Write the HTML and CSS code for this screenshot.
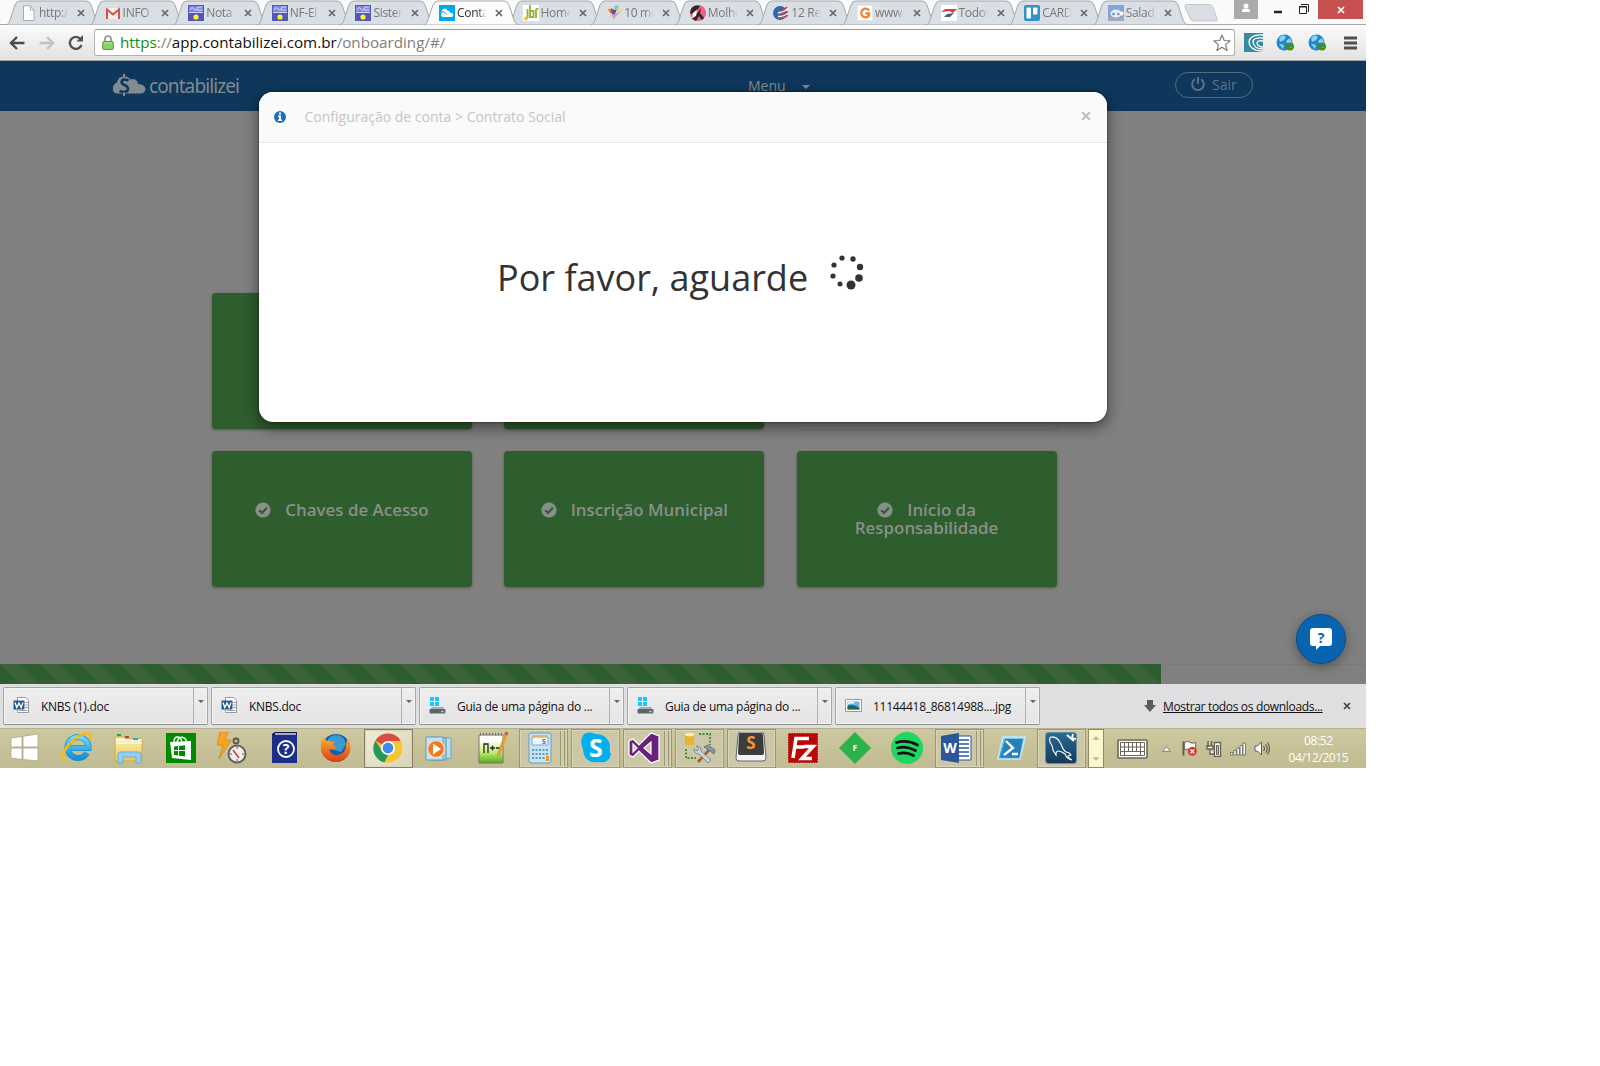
FILE: index.html
```html
<!DOCTYPE html>
<html lang="pt-BR">
<head>
<meta charset="utf-8">
<title>Contabilizei</title>
<link rel="stylesheet" href="styles.css">
</head>
<body>
<svg class="sprite" aria-hidden="true">
  <symbol id="tab-shape" viewBox="0 0 97 25"><path d="M0 25C4 24 4 23 5 20L10 5Q11.500 1 15 1H81Q84.500 1 86 5L91 20Q92.500 24.500 96 25Z"/></symbol>
  <symbol id="x" viewBox="0 0 8 8"><path d="M1 1L7 7M7 1L1 7" fill="none" stroke="currentColor" stroke-width="1.700"/></symbol>
  <symbol id="nf" viewBox="0 0 16 16"><path fill="#5358b4" d="M0 0h16v16H0z"/><path fill="#8187de" d="M1 1h14v6H1z"/><path d="M2 5q2-4 4-1t4-2h4M9 5h5M1 7.500h14" stroke="#dfe2ff" stroke-width=".9" fill="none"/><circle cx="8" cy="12" r="2.600" fill="#fff32c"/></symbol>
  <symbol id="check" viewBox="0 0 16 16"><circle cx="8" cy="8" r="7.600" fill="#8b8f8b"/><path d="M4.200 8.200l2.800 2.700 5-5.200" fill="none" stroke="#2e5d2e" stroke-width="2.200"/></symbol>
  <symbol id="globe" viewBox="0 0 20 18"><circle cx="8.500" cy="8.500" r="8" fill="#2089ca"/><path d="M3 4l4-3 3 2-2 3-4 2zM10 7l4-3 2 5-3 3zM3 10l5 1-1 4z" fill="#8ed2f2"/><circle cx="14" cy="12.500" r="2.800" fill="none" stroke="#4b8d17" stroke-width="2.400"/><path d="M10 9h4v4z" fill="#4b8d17"/></symbol>
  <symbol id="doc" viewBox="0 0 17 17"><path d="M4.500.5h8l3 3v12h-11z" fill="#fff" stroke="#999"/><path d="M12 5.500h3M12 8h3M12 10.500h3M6 13.500h8" stroke="#999"/><path d="M.5 3.500h11v9H.5z" fill="#2a5697"/><path d="M2 5.500l1.800 5L6 6l2.200 4.500 1.800-5" fill="none" stroke="#fff" stroke-width="1.300"/></symbol>
  <symbol id="drive" viewBox="0 0 17 17"><path fill="#18c8fa" d="M1 0h4v4H1zM6 0h4v4H6zM1 5h4v4H1zM6 5h4v4H6z"/><path d="M3 10h11l2 3H1z" fill="#a9b0b5"/><rect x=".5" y="12" width="16" height="4.500" rx="1" fill="#58666d"/><path d="M12 14.500h3" stroke="#4dfc63" stroke-width="1.500"/></symbol>
  <linearGradient id="sky" x2="0" y2="1"><stop stop-color="#72d7ff"/><stop offset="1" stop-color="#168fd7"/></linearGradient>
  <linearGradient id="folder" x2="0" y2="1"><stop stop-color="#fff2b4"/><stop offset="1" stop-color="#e8c55c"/></linearGradient>
  <linearGradient id="fire" x2="0" y2="1"><stop stop-color="#ffb229"/><stop offset="1" stop-color="#d93f16"/></linearGradient>
  <linearGradient id="sea" x2="0" y2="1"><stop stop-color="#296b98"/><stop offset="1" stop-color="#153958"/></linearGradient>
  <linearGradient id="sheet" x2="0" y2="1"><stop offset=".2" stop-color="#fff"/><stop offset=".6" stop-color="#c6ee74"/><stop offset="1" stop-color="#4fae1c"/></linearGradient>
</svg>

<div class="screen">
  <div class="tabstrip">
    <div class="tabs">
      <div class="tab"><svg class="shape"><use href="#tab-shape"/></svg><svg class="fav" viewBox="0 0 16 16"><path d="M2.500.8h7l3.500 4v10.700H2.500z" fill="#fff" stroke="#aaa"/><path d="M9.500 1v4H13" fill="none" stroke="#aaa"/></svg><span class="label">http:/</span><svg class="close"><use href="#x"/></svg></div>
      <div class="tab"><svg class="shape"><use href="#tab-shape"/></svg><svg class="fav" viewBox="0 0 16 16"><path d="M1 3h14v11H1z" fill="#f3f0ee"/><path d="M2 14V4.500L8 9.500l6-5V14" fill="none" stroke="#db5147" stroke-width="2"/></svg><span class="label">INFO</span><svg class="close"><use href="#x"/></svg></div>
      <div class="tab"><svg class="shape"><use href="#tab-shape"/></svg><svg class="fav"><use href="#nf"/></svg><span class="label">Nota</span><svg class="close"><use href="#x"/></svg></div>
      <div class="tab"><svg class="shape"><use href="#tab-shape"/></svg><svg class="fav"><use href="#nf"/></svg><span class="label">NF-El</span><svg class="close"><use href="#x"/></svg></div>
      <div class="tab"><svg class="shape"><use href="#tab-shape"/></svg><svg class="fav"><use href="#nf"/></svg><span class="label">Sister</span><svg class="close"><use href="#x"/></svg></div>
      <div class="tab active"><svg class="shape"><use href="#tab-shape"/></svg><svg class="fav" viewBox="0 0 16 16"><path fill="#00a9ea" d="M0 0h16v16H0z"/><path fill="#fff" d="M4 12a2.200 2.200 0 0 1-1-4 3 3 0 0 1 5.500-2.500A2.500 2.500 0 0 1 11 8a2 2 0 0 1 2 4z"/><path d="M3 6.500q3 0 5 3" stroke="#00a9ea" fill="none"/></svg><span class="label">Conta</span><svg class="close"><use href="#x"/></svg></div>
      <div class="tab"><svg class="shape"><use href="#tab-shape"/></svg><svg class="fav" viewBox="0 0 16 16"><path fill="#fff" d="M0 0h16v16H0z"/><path d="M4.500 4v8q0 2-2.500 2M7 0v12h3.500V6H7M13 13V5q0-1.500 2.500-1" fill="none" stroke="#93b937" stroke-width="1.900"/><circle cx="3" cy="13.500" r="2" fill="#e5c928"/></svg><span class="label">Home</span><svg class="close"><use href="#x"/></svg></div>
      <div class="tab"><svg class="shape"><use href="#tab-shape"/></svg><svg class="fav" viewBox="0 0 16 16"><path fill="#f4d77c" d="M1 4l4-3v6z"/><path fill="#e0559a" d="M2 4l6 1-3 4z"/><path fill="#65507e" d="M5 3l3 2 3-1-2 5H6z"/><path fill="#8bc3e5" d="M8 1l4-1 1 4-5 1zM9 9l6-3-5 6z"/><path fill="#f2d966" d="M12 2l4 4-5 2zM4 9l4 1-3 3z"/><path fill="#d78cba" d="M6 9h4l-2 6z"/></svg><span class="label">10 mo</span><svg class="close"><use href="#x"/></svg></div>
      <div class="tab"><svg class="shape"><use href="#tab-shape"/></svg><svg class="fav" viewBox="0 0 16 16"><circle cx="8" cy="8" r="8" fill="#ee6379"/><path d="M1 4q3-5 9-3L8 4 5 6 2 9 0 8zM6 10l5-7-1 5 4 5-2 2-3-4-3 5-4-2z" fill="#2d2830"/><path d="M3 8l4-3-1 6-4 2z" fill="#fff"/></svg><span class="label">Molho</span><svg class="close"><use href="#x"/></svg></div>
      <div class="tab"><svg class="shape"><use href="#tab-shape"/></svg><svg class="fav" viewBox="0 0 16 16"><circle cx="7" cy="8" r="7" fill="#2e69a8"/><path d="M5 8q6-1 10-4M5 11.500q6 0 10-3" fill="none" stroke="#fff" stroke-width="1.400"/><path d="M8 6q4-1 6-4M6 9.500q6-1 9-3M7 13q5 0 8-3" fill="none" stroke="#d34450" stroke-width="1.600"/></svg><span class="label">12 Re</span><svg class="close"><use href="#x"/></svg></div>
      <div class="tab"><svg class="shape"><use href="#tab-shape"/></svg><svg class="fav" viewBox="0 0 16 16"><path fill="#fff" stroke="#ddd" stroke-dasharray="1" d="M.5.5h15v15H.5z"/><path d="M12 5.500a4.300 4.300 0 1 0 0 5V8.500H8.500" fill="none" stroke="#f08238" stroke-width="2.300"/></svg><span class="label">www.</span><svg class="close"><use href="#x"/></svg></div>
      <div class="tab"><svg class="shape"><use href="#tab-shape"/></svg><svg class="fav" viewBox="0 0 16 16"><path fill="#fff" d="M0 0h16v16H0z"/><path fill="#d93d45" d="M0 7l4-3h12l-4 4-4-2z"/><path fill="#3c6583" d="M3 12l3-3 7-1-4 4z"/></svg><span class="label">Todos</span><svg class="close"><use href="#x"/></svg></div>
      <div class="tab"><svg class="shape"><use href="#tab-shape"/></svg><svg class="fav" viewBox="0 0 16 16"><rect width="16" height="16" rx="2" fill="#3191cd"/><rect x="2.500" y="2.500" width="4.500" height="11" rx=".7" fill="#fff"/><rect x="9" y="2.500" width="4.500" height="7" rx=".7" fill="#fff"/></svg><span class="label">CARD</span><svg class="close"><use href="#x"/></svg></div>
      <div class="tab"><svg class="shape"><use href="#tab-shape"/></svg><svg class="fav" viewBox="0 0 16 16"><path fill="#80a7d8" d="M0 0h16v16H0z"/><path fill="#a2aab4" d="M0 12h16v4H0z"/><ellipse cx="8" cy="8.500" rx="5.500" ry="4" fill="#e5edf4"/><circle cx="5.500" cy="9" r="1.300" fill="#7e8aa0"/><circle cx="10.500" cy="9" r="1.300" fill="#7e8aa0"/><circle cx="13.500" cy="8.500" r="2" fill="#fff"/></svg><span class="label">Salad</span><svg class="close"><use href="#x"/></svg></div>
    </div>
    <svg class="newtab" viewBox="0 0 34 18"><path d="M3 .5h22q3 0 4 3l4 11q1 2.500-2 2.500H10q-3 0-4-3L1 3Q.5.5 3 .5z" fill="#dadee4" stroke="#c2c5c9"/></svg>
    <div class="window-controls">
      <span class="user"><svg width="24" height="19"><circle cx="12" cy="6" r="2.500" fill="#fff"/><path d="M8 12v-1.500q0-2 4-2t4 2V12z" fill="#fff"/></svg></span>
      <svg width="44" height="19" class="minmax"><path d="M6 12h8" stroke="#222" stroke-width="2.500"/><path d="M31.500 6.500h7v7h-7zM31 7h8" fill="none" stroke="#222"/><path d="M33 4.500h7.500V12" fill="none" stroke="#222"/></svg>
      <span class="win-close"><svg width="8" height="8"><use href="#x"/></svg></span>
    </div>
  </div>

  <div class="toolbar">
    <svg class="nav back" viewBox="0 0 16 14"><path d="M8 1L2 7l6 6M2 7h13.500" fill="none" stroke="#4b4b4b" stroke-width="2.400"/></svg>
    <svg class="nav fwd" viewBox="0 0 16 14"><path d="M8 1l6 6-6 6M14 7H.5" fill="none" stroke="#c2c2c2" stroke-width="2.400"/></svg>
    <svg class="nav reload" viewBox="0 0 16 15"><path d="M12.500 4A6 6 0 1 0 13.500 10" fill="none" stroke="#505050" stroke-width="2.400"/><path d="M15 0v6.500H8.500z" fill="#505050"/></svg>
    <div class="omnibox">
      <svg class="lock" viewBox="0 0 12 15"><path d="M3 7V4a3 3 0 0 1 6 0v3" fill="none" stroke="#8f8f8f" stroke-width="1.700"/><rect x=".7" y="6.500" width="10.600" height="8" rx="1" fill="#8ad06a" stroke="#55a03b"/><path d="M2 8h8" stroke="#bbe8a7"/></svg>
      <span class="url"><span class="scheme">https</span>://<span class="host">app.contabilizei.com.br</span>/onboarding/#/</span>
      <svg class="star" viewBox="0 0 18 17"><path d="M9 1l2.200 5.500 6 .4-4.600 3.800 1.500 5.800L9 13.300l-5.100 3.200 1.500-5.800L.8 6.900l6-.4z" fill="none" stroke="#777" stroke-width="1.100" stroke-linejoin="round"/></svg>
    </div>
    <svg class="ext-a" viewBox="0 0 19 19"><path fill="#388b9e" d="M0 0h19v19H0z"/><path d="M19 2Q6 1 5 9q1 9 14 9M19 5Q9 4 9 9q1 7 10 7M19 8q-6-1-6 2 1 4 6 4" fill="none" stroke="#fff" stroke-width="1.300"/></svg>
    <svg class="ext-b"><use href="#globe"/></svg>
    <svg class="ext-c"><use href="#globe"/></svg>
    <svg class="burger" viewBox="0 0 13 14"><path d="M0 2h13M0 7h13M0 12h13" stroke="#505050" stroke-width="3"/></svg>
  </div>

  <main class="page">
    <header class="site-header">
      <div class="brand">
        <svg viewBox="0 0 33 22" class="cloud"><path d="M6 19.500H4.500A5 5 0 0 1 1 11q.5-2 3-2.500Q5 2.500 11 2.500q4-.5 6.500 3 4-1.500 6.500 1.500 1 1.500 1 3 7 .5 7.500 5-.5 4.500-5 4.500z" fill="#848b90"/><path d="M15.500 6.500Q9 4 8.500 8c0 3.500 7 3 6.500 7-.5 3.500-4.500 3.500-8.500 2" fill="none" stroke="#0e375b" stroke-width="2.600"/><path d="M11 0v3M11 18.500V22" stroke="#848b90" stroke-width="2"/></svg>
        <span class="brand-name">contabilizei</span>
      </div>
      <div class="menu">Menu <i></i></div>
      <div class="logout"><svg viewBox="0 0 14 14"><path d="M4 2.300a5.800 5.800 0 1 0 6 0M7 0v7" fill="none" stroke="currentColor" stroke-width="1.900"/></svg>Sair</div>
    </header>
    <div class="cards">
      <div class="card"></div><div class="card"></div><div class="card pending"></div>
      <div class="card"><span><svg><use href="#check"/></svg>Chaves de Acesso</span></div>
      <div class="card"><span><svg><use href="#check"/></svg>Inscrição Municipal</span></div>
      <div class="card"><span><svg><use href="#check"/></svg>Início da<br>Responsabilidade</span></div>
    </div>
    <div class="progress"><div class="bar"></div></div>
    <section class="modal">
      <div class="modal-head">
        <svg class="info" viewBox="0 0 12 12"><circle cx="6" cy="6" r="6" fill="#1b6fbd"/><path d="M5 1.600h2v2H5zM4 4.500h3v4h1V10H4V8.500h1V6H4z" fill="#fff"/></svg>
        <span>Configuração de conta &gt; Contrato Social</span>
        <svg class="dismiss"><use href="#x"/></svg>
      </div>
      <div class="modal-body"><span>Por favor, aguarde</span>
        <svg class="spinner" viewBox="0 0 34 36" fill="#333"><circle cx="12" cy="3" r="2.600"/><circle cx="23" cy="4" r="2.700"/><circle cx="30" cy="12" r="3.200"/><circle cx="29" cy="23" r="3.800"/><circle cx="21" cy="30" r="4.500"/><circle cx="10" cy="29" r="2.500"/><circle cx="3" cy="21" r="2.600"/><circle cx="4" cy="10" r="2.600"/></svg>
      </div>
    </section>
    <div class="help"><svg viewBox="0 0 22 22"><path d="M3 0h16q3 0 3 3v12q0 3-3 3H10l-4 4v-4H3q-3 0-3-3V3q0-3 3-3z" fill="#fff"/></svg><b>?</b></div>
  </main>

  <div class="downloads">
    <div class="dl"><svg><use href="#doc"/></svg><span>KNBS (1).doc</span><i></i></div>
    <div class="dl"><svg><use href="#doc"/></svg><span>KNBS.doc</span><i></i></div>
    <div class="dl"><svg><use href="#drive"/></svg><span>Guia de uma página do ...</span><i></i></div>
    <div class="dl"><svg><use href="#drive"/></svg><span>Guia de uma página do ...</span><i></i></div>
    <div class="dl jpg"><svg viewBox="0 0 17 17"><path d="M.5 2.500h16v12H.5z" fill="#fff" stroke="#999"/><path d="M2.500 4.500h12v8h-12z" fill="#63b3e8"/><path d="M2.500 9q5-3 12 2v1.500h-12z" fill="#27644f"/><path d="M3 6.500q4-2 6 0" stroke="#fff" fill="none" stroke-width="1.500"/></svg><span>11144418_86814988....jpg</span><i></i></div>
    <div class="all"><svg viewBox="0 0 12 12"><path d="M3 0h6v5h3l-6 7-6-7h3z" fill="#5b5b5b"/></svg><span>Mostrar todos os downloads...</span><svg class="shelf-x"><use href="#x"/></svg></div>
  </div>

  <div class="taskbar">
    <div class="task"><svg viewBox="0 0 32 32"><path d="M2 6l11-1.500V15H2zM14 4.300L29 2v13H14zM2 16h11v11.500L2 26zM14 16h15v13l-15-1.500z" fill="#fff" stroke="#aaa583" stroke-width=".8"/></svg></div>
    <div class="task"><svg viewBox="0 0 32 32"><path d="M26 21a10.500 10.500 0 1 1 1.500-5H9" fill="none" stroke="#168fd0" stroke-width="6"/><path d="M26 21a10.500 10.500 0 1 1 1.500-5H9" fill="none" stroke="url(#sky)" stroke-width="4.500"/><path d="M5 29q-7-3 1-14Q18 0 27 2q4 1 2 6" fill="none" stroke="#f5bd16" stroke-width="2.600"/></svg></div>
    <div class="task"><svg viewBox="0 0 32 32"><path d="M2 5h9l2 2h16v22H2z" fill="url(#folder)" stroke="#caac55"/><path d="M3 8h26M3 11h26" stroke="#fff"/><path d="M4 3h4" stroke="#28a446" stroke-width="2"/><path d="M12 5h4" stroke="#d93a30" stroke-width="2"/><path d="M20 7h5" stroke="#1fa6e0" stroke-width="2"/><path d="M5 31v-9q0-2 3-2h17q3 0 3 2v9h-5v-6H10v6z" fill="#95d0ef" stroke="#69acd2"/></svg></div>
    <div class="task"><svg viewBox="0 0 32 32"><path d="M1 1h30v30H1z" fill="#008a00"/><path d="M5 10l21-1v19L7 26z" fill="#fff"/><path d="M9 10q0-5 3.500-5t4.500 5M12 10q2-6 6-4.500t3 4.500" fill="none" stroke="#fff" stroke-width="1.400"/><path d="M9 14.500l4-.4V18H9zM14 14l6-.7V18h-6zM9 19h4v4.500L9 23zM14 19h6v5.500l-6-.8z" fill="#008a00"/></svg></div>
    <div class="task"><svg viewBox="0 0 32 32"><path d="M3 0h8L8 8h6L2 27l4-14H0z" fill="#f8a71b" stroke="#d38424" stroke-width=".8"/><circle cx="20" cy="22" r="8.500" fill="#eee" stroke="#66625a" stroke-width="2"/><circle cx="19" cy="9" r="2.500" fill="none" stroke="#5a554d" stroke-width="1.800"/><path d="M20 15v2M20 27v2M13 22h2M25 22h2" stroke="#555"/><path d="M16 18l6 8" stroke="#d63831" stroke-width="1.600"/></svg></div>
    <div class="task"><svg viewBox="0 0 32 32"><path d="M4 2l3-2h22v30H4z" fill="#10165c"/><path d="M4 3h25v28H4z" fill="#1c2d8a"/><path d="M7 2h21" stroke="#ddd" stroke-width="1.500"/><circle cx="18" cy="17" r="8" fill="none" stroke="#fff" stroke-width="1.800"/><text x="18" y="22" class="glyph q">?</text></svg></div>
    <div class="task"><svg viewBox="0 0 32 32"><circle cx="16" cy="16" r="14" fill="#195ba4"/><path d="M16 3q8 0 10 9l-5 8-10-3-4-8q3-6 9-6z" fill="#3a9ad6"/><path d="M3 5l4 4q3-1 5 1l3-1-2 4 4 2q-4 4-8 2 2 7 9 6 8-2 8-9l1-7q5 7 3 13a15 14 0 0 1-29-1q-1-8 2-14z" fill="url(#fire)"/></svg></div>
    <div class="task"><div class="box lit"><svg viewBox="0 0 32 32"><circle cx="16" cy="16" r="14.500" fill="#f6c62e"/><path d="M16 16L3.500 8.700A14.500 14.500 0 0 1 28.700 9H16z" fill="#d94c40"/><path d="M3.500 8.700L12 22l3 1-3.500 7.200A14.500 14.500 0 0 1 3.500 8.700z" fill="#27985c"/><path d="M14 23h2q5 0 6-3l-6 10.500h-4.500z" fill="#f6c62e"/><path d="M11 21l5 2-3.500 7.300-3-1z" fill="#27985c"/><circle cx="16" cy="16" r="7" fill="#fff"/><circle cx="16" cy="16" r="5.400" fill="#4389ec"/></svg></div></div>
    <div class="task"><svg viewBox="0 0 32 32"><path d="M10 5l17 1v20l-16 2z" fill="#b9ddeb" stroke="#6aaac2"/><path d="M7 5l15 1v22H7z" fill="#a5d3e6" stroke="#5796b5"/><path d="M2 5h17v23H2z" fill="#bce4f5" stroke="#699db2"/><circle cx="12" cy="17" r="8.500" fill="#ef7823" stroke="#fad7b9" stroke-width="1.500"/><path d="M9 11.500v11l8-5.500z" fill="#fff"/></svg></div>
    <div class="task"><svg viewBox="0 0 32 32"><path d="M3 3h24v28H3z" fill="url(#sheet)" stroke="#777"/><path d="M4 2h22" stroke="#777" stroke-width="2.500" stroke-dasharray="1 2"/><path d="M8 21v-9h4v9M14 16h5M16.500 13.500v5M20 16h4" stroke="#222" fill="none" stroke-width="1.300"/><path d="M30 2l-8 22" stroke="#e1a034" stroke-width="3.200"/><path d="M31 0l-1 3" stroke="#d25b50" stroke-width="3.500"/></svg></div>
    <div class="task"><div class="box stack"><svg viewBox="0 0 32 32"><rect x="5" y="1" width="22" height="30" rx="2" fill="#c8e3f2" stroke="#629dc1"/><path d="M8 5h16v8H8z" fill="#eaf6fb" stroke="#78aac7"/><path d="M8 4h16" stroke="#efaa43" stroke-width="1.500"/><text x="20" y="12" class="glyph digit">5</text><path d="M8 18h16M8 22h16M8 26h13" stroke="#5f96bb" stroke-width="2" stroke-dasharray="2 1.500"/><path d="M22 24h3v5h-3z" fill="#ef9b2c"/></svg></div></div>
    <div class="task"><div class="box"><svg viewBox="0 0 32 32"><path d="M4 2q6-3 11 0 13 0 15 12-1 5 1 8-2 10-12 8Q4 32 3 17q-4-9 1-15z" fill="#00aff0"/><text x="16" y="25" class="glyph skype">S</text></svg></div></div>
    <div class="task"><div class="box stack"><svg viewBox="0 0 32 32"><path d="M1 9l4-2 6 6L23 1l8 3v24l-8 3-12-12-6 6-4-2zM5 12v8l4-4zM16 16l7 6V10z" fill="#68217a" fill-rule="evenodd" stroke="#fff" stroke-width="1.200"/></svg></div></div>
    <div class="task"><div class="box"><svg viewBox="0 0 32 32"><path d="M15 2h11v11M2 17v9h10" fill="none" stroke="#3f8a35" stroke-width="1.800" stroke-dasharray="2 1.500"/><path d="M1 2h9v11H1z" fill="#e7b52c"/><ellipse cx="5.500" cy="2.500" rx="4.500" ry="1.800" fill="#fff0a0"/><path d="M14 30l12-13" stroke="#a4612d" stroke-width="2.600"/><path d="M12 14l3 3-2 2-3-2q0 5 5 5l9 9 3-3-10-9q1-5-5-5z" fill="#c8d2da" stroke="#6f7b83" stroke-width=".8"/><path d="M20 15l4-2 7 5-1 4-4-3z" fill="#8499aa" stroke="#576979" stroke-width=".8"/></svg></div></div>
    <div class="task"><div class="box"><svg viewBox="0 0 32 32"><path d="M3 3q0-3 3-3h20q3 0 3 3l2 23q0 3-3 3H4q-3 0-3-3z" fill="#f2f2f2" stroke="#666"/><path d="M4 2q0-1 2-1h20q2 0 2 2l1 18q0 2-2 2H5q-2 0-2-2z" fill="#3c3c3c"/><text x="16" y="17" class="glyph sublime">S</text></svg></div></div>
    <div class="task"><svg viewBox="0 0 32 32"><path d="M.8.8h30.400v30.400H.8z" fill="#b50807" stroke="#f1dddd" stroke-dasharray="1.500 1" stroke-width="1"/><path d="M6 26L9 6.500h13M8 15h9M17 14.500h9l-11 12h10" fill="none" stroke="#fff" stroke-width="3.600"/></svg></div>
    <div class="task"><svg viewBox="0 0 32 32"><path d="M16 0l16 16-16 16L0 16z" fill="#2bb24c"/><text x="16" y="19" class="glyph small">F</text></svg></div>
    <div class="task"><svg viewBox="0 0 32 32"><circle cx="16" cy="16" r="16" fill="#1ed760"/><path d="M5.500 10.500q11-3 21 2.500M6.500 16q9-2.500 18 2.500M7.500 21.500q8-2 15 2" fill="none" stroke="#111" stroke-width="2.700" stroke-linecap="round"/></svg></div>
    <div class="task"><div class="box stack"><svg viewBox="0 0 32 32"><path d="M16 4h15v24H16z" fill="#fff" stroke="#2b579a"/><path d="M18 8h11M18 12h11M18 16h11M18 20h11M18 24h11" stroke="#2b579a" stroke-width="1.500"/><path d="M1 4l18-3v30L1 28z" fill="#2b579a"/><text x="10" y="21" class="glyph word">W</text></svg></div></div>
    <div class="task"><svg viewBox="0 0 32 32"><path d="M8 5h22l-5 22H3z" fill="url(#sky)" stroke="#cce7f3" stroke-width="1.500"/><path d="M10 7h18l-4 18H6z" fill="#277fb7"/><path d="M11 9l7 7-9 7M17 22h6" fill="none" stroke="#fff" stroke-width="2.300"/></svg></div>
    <div class="task"><div class="box"><svg viewBox="0 0 32 32"><rect x=".5" y=".5" width="31" height="31" rx="3" fill="url(#sea)" stroke="#6c8fa6"/><path d="M6 5q6-1 10 7 2 6 5 8 3 0 5 3l-3 1q1 3 4 4-5-1-7-6-4-3-7-3-2 0-2 4l-3-5q0-4-3-8-1-4 1-5z" fill="none" stroke="#fff" stroke-width="1.100"/><path d="M22 3l7 6M28 2l-1 4 4 1" stroke="#fff" stroke-width="1.800" fill="none"/></svg></div></div>
    <div class="scroller"><svg viewBox="0 0 16 38"><path d="M4 9l4-4 4 4zM4 29h8l-4 4z" fill="#bdb68a"/></svg></div>
    <svg class="keyboard" viewBox="0 0 31 20"><rect x="1" y="1" width="29" height="18" rx="1" fill="#fff" stroke="#6a675a" stroke-width="1.600"/><path d="M3.500 3.500h24v13h-24zM3.500 8h24M3.500 12.500h24M7.500 4v8M11.500 4v8M15.500 4v8M19.500 4v8M23.500 4v8M7.500 12.500v4M23.500 12.500v4" fill="none" stroke="#6a675a"/></svg>
    <svg class="arrow" viewBox="0 0 9 6"><path d="M4.500.5l3.800 4.800H.7z" fill="#fff" stroke="#6a675a" stroke-width=".8"/></svg>
    <svg class="tray flag" viewBox="0 0 17 17"><path d="M1.500 1v15" stroke="#625f53" stroke-width="2"/><path d="M2.500 2q4-2 6 0t6 0v8q-4 2-6 0t-6 0z" fill="#fff" stroke="#625f53"/><circle cx="11" cy="11.500" r="4.800" fill="#d83b31"/><path d="M9 9.500l4 4m0-4l-4 4" stroke="#fff" stroke-width="1.400"/></svg>
    <svg class="tray" viewBox="0 0 16 17"><path d="M8.500 2.500h6v14h-6z" fill="#fff" stroke="#625f53" stroke-width="1.300"/><path d="M10.500 5.500h2v9h-2z" fill="#cac49b" stroke="#625f53"/><path d="M2 1v5M5.500 1v5M1 6h6v3H1zM4 9v5h4" fill="#fff" stroke="#625f53" stroke-width="1.400"/></svg>
    <svg class="tray" viewBox="0 0 16 17"><path d="M.5 12.500h2.500V15H.5zM3.700 10.500h2.500V15H3.700zM6.900 8h2.500v7H6.900zM10.100 5.500h2.500V15h-2.500zM13 3h2.500v12H13z" fill="#fff" stroke="#625f53" stroke-width=".8"/></svg>
    <svg class="tray" viewBox="0 0 16 17"><path d="M1 6h2.500l4-4v13l-4-4H1z" fill="#fff" stroke="#625f53"/><path d="M9.500 6q2 2.500 0 5M11.500 4q3.500 4.500 0 9M13.500 2.500q4 6 0 12" fill="none" stroke="#625f53" stroke-width="1.200"/></svg>
    <div class="clock">08:52<br>04/12/2015</div>
  </div>
</div>
</body>
</html>
```
FILE: styles.css
```css
* { box-sizing: border-box; }
body { margin: 0; background: #fff; font-family: "Open Sans", "Noto Sans", sans-serif; }
svg { display: block; flex: none; }
.sprite { position: absolute; width: 0; height: 0; }
.screen { width: 1366px; height: 768px; display: flex; flex-direction: column; overflow: hidden; }

/* browser tabs */
.tabstrip { height: 25px; display: flex; background: #fafafa; border-bottom: 1px solid #a9a9a9; padding-left: 5px; }
.tabs { display: flex; width: 1179px; flex: none; }
.tab { width: 83.600px; height: 25px; flex: none; position: relative; display: flex; align-items: center; padding: 0 0 0 16px; font-size: 12px; color: #777; }
.shape { position: absolute; left: 0; top: 0; width: 97px; height: 25px; fill: #dadfe6; stroke: #a5a7aa; stroke-width: 1; }
.tab.active { z-index: 2; color: #333; }
.active .shape { fill: #fcfcfc; }
.tab > :not(.shape) { position: relative; z-index: 1; }
.fav { width: 16px; height: 16px; margin-top: 1px; }
.label { width: 30px; margin-left: 2px; overflow: hidden; white-space: nowrap; letter-spacing: -.3px; -webkit-mask-image: linear-gradient(90deg, #000 70%, transparent); mask-image: linear-gradient(90deg, #000 70%, transparent); }
.close { width: 8px; height: 8px; margin: 1px 0 0 8px; color: #686868; }
.newtab { width: 34px; height: 18px; margin-top: 4px; }
.window-controls { display: flex; margin-left: 16px; }
.user { width: 24px; height: 19px; background: #ababab; }
.minmax { margin: 0 6px 0 10px; }
.win-close { width: 45px; height: 19px; background: #c75050; color: #fff; display: flex; align-items: center; justify-content: center; }

/* toolbar */
.toolbar { height: 36px; flex: none; display: flex; align-items: center; padding: 0 9px; background: linear-gradient(#fbfbfb, #e2e2e2); border-bottom: 1px solid #a5a5a5; }
.nav { width: 16px; height: 14px; }
.fwd { margin-left: 14px; }
.reload { width: 16px; height: 15px; margin: 0 10px 0 13px; }
.omnibox { width: 1141px; height: 27px; display: flex; align-items: center; background: #fff; border: 1px solid #b2b2b2; border-top-color: #999; border-radius: 3px; padding: 0 3px 0 7px; }
.lock { width: 12px; height: 15px; margin-right: 6px; }
.url { font-size: 15.200px; line-height: 20px; color: #808080; margin-top: -2px; }
.scheme { color: #0c930c; }
.host { color: #111; }
.star { width: 18px; height: 17px; margin-left: auto; }
.ext-a { width: 19px; height: 19px; margin-left: 9px; }
.ext-b { width: 20px; height: 18px; margin-left: 13px; }
.ext-c { width: 20px; height: 18px; margin-left: 12px; }
.burger { width: 13px; height: 14px; margin-left: 16px; }

/* application page */
.page { height: 623px; flex: none; position: relative; background: #808080; display: flex; flex-direction: column; overflow: hidden; }
.site-header { height: 50px; flex: none; background: #0e375b; display: flex; color: #83898e; font-size: 14px; }
.brand { display: flex; width: 748px; padding: 13px 0 0 113px; }
.cloud { width: 33px; height: 22px; }
.brand-name { font: 400 19px/24px "Noto Sans", sans-serif; margin-left: 3px; letter-spacing: -.9px; }
.menu { width: 427px; padding-top: 15px; line-height: 19px; display: flex; }
.menu i { margin: 9px 0 0 16px; border: 4px solid transparent; border-top-color: #83898e; height: 4px; }
.logout { width: 78px; height: 26px; margin-top: 11px; border: 1px solid #526b80; border-radius: 13px; display: flex; align-items: center; padding: 0 0 2px 15px; gap: 7px; color: #5f7485; }
.logout svg { width: 14px; height: 14px; }
.cards { display: grid; grid-template-columns: repeat(3, 260px); gap: 22px 32.300px; padding: 182px 0 0 212px; }
.card { height: 136px; background: #2e5d2e; border-radius: 4px; box-shadow: 0 1px 3px rgba(0,0,0,.35); text-align: center; color: #8b8f8b; font-size: 16.900px; font-weight: 600; line-height: 18px; padding-top: 50px; }
.card svg { display: inline-block; width: 16px; height: 16px; vertical-align: -2px; margin-right: 14px; }
.card.pending { background: #808080; box-shadow: 0 0 0 1px #747474; }
.progress { height: 20px; margin-top: auto; border-top: 1px solid #7a7a7a; }
.bar { width: 1161px; height: 20px; margin-top: -1px; background: #2e5d2e linear-gradient(45deg, #3b623b 25%, transparent 25%, transparent 50%, #3b623b 50%, #3b623b 75%, transparent 75%) 0 0 / 40px 40px; }
.modal { position: absolute; left: 259px; top: 31px; width: 848px; height: 330px; border-radius: 14px; background: #fff; box-shadow: 0 5px 15px rgba(0,0,0,.5), 0 0 2px rgba(0,0,0,.7); overflow: hidden; }
.modal-head { height: 51px; background: #fafafa; border-bottom: 1px solid #e5e5e5; display: flex; align-items: center; padding: 0 16px 2px 15px; color: #c5c5c5; font-size: 14px; }
.info { width: 12px; height: 12px; margin: 2px 18.500px 0 0; }
.dismiss { width: 10px; height: 10px; margin-left: auto; color: #bdbdbd; }
.modal-body { display: flex; padding: 110px 0 0 238px; font-size: 36px; line-height: 50px; color: #333; }
.modal-body span { width: 333px; white-space: nowrap; }
.spinner { width: 34px; height: 36px; margin-top: 2px; }
.help { position: absolute; left: 1296px; top: 553px; width: 50px; height: 50px; border-radius: 50%; background: #0864ae; border: 1px solid #064c96; box-shadow: 0 3px 12px rgba(0,0,0,.35); display: grid; place-items: center; }
.help > * { grid-area: 1 / 1; }
.help svg { width: 22px; height: 22px; }
.help b { font-size: 14px; line-height: 18px; color: #0864ae; margin-top: -3px; position: relative; }

/* download shelf */
.downloads { height: 44px; flex: none; background: #dfdee0; display: flex; align-items: center; gap: 3px; padding-left: 3px; font-size: 12px; color: #111; }
.dl { width: 205px; height: 38px; border: 1px solid #a6a6a6; border-bottom-color: #8d8d8d; border-radius: 2px; background: linear-gradient(#eee, #e4e4e4); display: flex; align-items: center; padding-left: 9px; box-shadow: inset 0 0 0 1px #f4f4f4; }
.dl svg { width: 17px; height: 17px; margin-top: -1px; }
.dl span { margin-left: 11px; letter-spacing: -.27px; white-space: nowrap; }
.dl i { width: 14px; height: 36px; margin-left: auto; border-left: 1px solid #b0b0b0; padding: 12px 0 0 4px; }
.dl i::before { content: ""; display: block; width: 0; border: 3px solid transparent; border-top-color: #666; }
.all { display: flex; align-items: center; margin-left: 101px; }
.all svg { width: 12px; height: 12px; margin-right: 7px; }
.all span { text-decoration: underline; letter-spacing: -.33px; white-space: nowrap; width: 160px; }
.all .shelf-x { width: 8px; height: 8px; margin: 0 0 0 20px; color: #444; }

/* taskbar */
.taskbar { height: 40px; flex: none; background: linear-gradient(#cec8a0, #c0bb90); border-top: 1px solid #b5b190; display: flex; align-items: center; }
.task { width: 51.900px; height: 39px; flex: none; display: flex; align-items: center; justify-content: center; }
.task svg { width: 32px; height: 32px; margin-top: -2px; }
.taskbar > .task:first-child { margin-left: -1px; }
.box { width: 49px; height: 39px; border: 1px solid #9d9873; background: #ccc8a7; box-shadow: inset 0 0 0 1px #d9d5b8; display: flex; align-items: center; justify-content: center; flex: none; }
.box.lit { background: linear-gradient(135deg, #eeecd9, #d8d4b9); border-color: #858064; }
.box.stack { padding-right: 7px; background: linear-gradient(90deg, transparent 40px, #9d9873 40px 41px, #d0ccac 41px 44px, #9d9873 44px 45px, transparent 45px), #ccc8a7; }
.task:nth-child(19) { width: 52.500px; }
.task:nth-child(21) { width: 48px; }
.glyph { font-family: "Open Sans", sans-serif; text-anchor: middle; fill: #fff; font-weight: 700; }
.q { font-size: 14px; }
.digit { font-size: 7px; fill: #477da5; }
.skype { font-size: 25px; }
.sublime { font-size: 17px; fill: #ef983b; }
.small { font-size: 8px; }
.word { font-size: 14px; }
.scroller { width: 16px; height: 39px; margin: 0 13px 0 3px; background: #fdf8cb; border: 1px solid #8e8968; }
.scroller svg { width: 14px; height: 37px; }
.keyboard { width: 31px; height: 20px; }
.arrow { width: 9px; height: 6px; margin: 0 11px 0 14px; }
.tray { width: 16px; height: 17px; margin-right: 8px; }
.clock { width: 80px; margin-left: 0; text-align: center; color: #fff; font-size: 12px; line-height: 17px; letter-spacing: -.4px; }
```
